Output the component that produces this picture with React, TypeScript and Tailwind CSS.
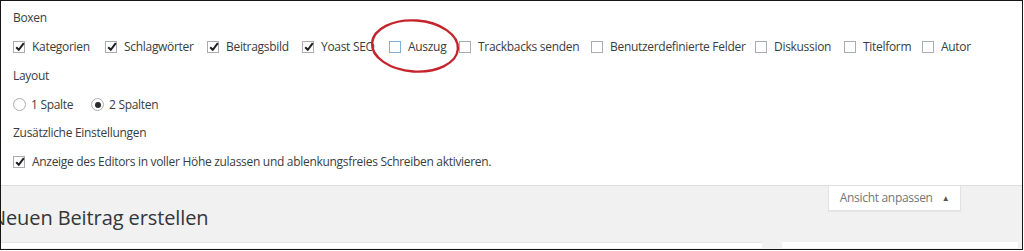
const font = { fontFamily: '"Open Sans", "Noto Sans", sans-serif' };

function Check({ checked = false, focus = false }: { checked?: boolean; focus?: boolean }) {
  return (
    <span
      className={`relative inline-flex h-[12px] w-[12px] shrink-0 items-center justify-center border bg-white ${
        focus ? "border-[#7fb0dc]" : "border-[#a9adb2]"
      }`}
    >
      {checked && (
        <svg viewBox="0 0 12 12" className="absolute left-[0px] top-[-1px] h-[12px] w-[12px]">
          <path d="M2.2 6.2 L4.8 8.8 L9.8 2.2" fill="none" stroke="#1f1f1f" strokeWidth="2" />
        </svg>
      )}
    </span>
  );
}

function Radio({ checked = false }: { checked?: boolean }) {
  return (
    <span className="inline-flex h-[13px] w-[13px] shrink-0 items-center justify-center rounded-full border border-[#a9adb2] bg-white">
      {checked && <span className="h-[6px] w-[6px] rounded-full bg-[#2a2a2a]" />}
    </span>
  );
}

const boxes = [
  { label: "Kategorien", checked: true, w: "w-[92px]" },
  { label: "Schlagwörter", checked: true, w: "w-[102px]" },
  { label: "Beitragsbild", checked: true, w: "w-[95px]" },
  { label: "Yoast SEO", checked: true, w: "w-[87px]" },
  { label: "Auszug", checked: false, focus: true, w: "w-[70px]" },
  { label: "Trackbacks senden", checked: false, w: "w-[132px]" },
  { label: "Benutzerdefinierte Felder", checked: false, w: "w-[164px]" },
  { label: "Diskussion", checked: false, w: "w-[89px]" },
  { label: "Titelform", checked: false, w: "w-[78px]" },
  { label: "Autor", checked: false, w: "w-auto" },
];

export default function App() {
  return (
    <div className="h-[251px] w-[1024px] bg-white" style={font}>
      <div className="relative flex h-[250px] w-[1023px] flex-col overflow-hidden border border-[#161616] text-[12px] tracking-[-0.3px] text-[#3a3d40]">
        <div className="border-b border-[#dedede] bg-white pb-[9px] pl-[12px] pt-[2px]">
          <div className="flex h-[29px] items-center">Boxen</div>
          <div className="flex h-[29px] items-center">
            {boxes.map((b) => (
              <label key={b.label} className={`flex shrink-0 items-center gap-[7px] ${b.w}`}>
                <Check checked={b.checked} focus={b.focus} />
                <span>{b.label}</span>
              </label>
            ))}
          </div>
          <div className="flex h-[29px] items-center">Layout</div>
          <div className="flex h-[29px] items-center">
            <label className="flex w-[78px] items-center gap-[5px]">
              <Radio />
              <span>1 Spalte</span>
            </label>
            <label className="flex items-center gap-[5px]">
              <Radio checked />
              <span>2 Spalten</span>
            </label>
          </div>
          <div className="flex h-[28.5px] items-center">Zusätzliche Einstellungen</div>
          <div className="flex h-[28.5px] items-center">
            <label className="flex items-center gap-[7px]">
              <Check checked />
              <span>Anzeige des Editors in voller Höhe zulassen und ablenkungsfreies Schreiben aktivieren.</span>
            </label>
          </div>
        </div>

        <div className="flex-1 bg-[#f1f1f1]">
          <div className="flex justify-end pr-[61px]">
            <div className="flex h-[25px] w-[133px] items-center justify-center gap-[9px] border-x border-b border-[#e2e2e2] bg-white text-[#72777c] shadow-[0_1px_1px_rgba(0,0,0,0.04)]">
              <span>Ansicht anpassen</span>
              <span className="text-[8px] text-[#555]">▲</span>
            </div>
          </div>
          <h1 className="ml-[-10px] mt-[-5px] h-[24px] text-[20px] font-normal leading-[24px] tracking-[-0.1px] text-[#33363a]">
            Neuen Beitrag erstellen
          </h1>
          <div className="mt-[12px] flex h-[6px]">
            <div className="w-[761px] border-t border-[#e4e4e4] bg-white" />
            <div className="w-[20px]" />
            <div className="w-[236px] bg-white" />
          </div>
        </div>

        <svg className="pointer-events-none absolute left-[368px] top-[17px]" width="92" height="56" viewBox="0 0 92 56">
          <ellipse cx="46" cy="28" rx="43" ry="25.5" fill="none" stroke="#c4242b" strokeWidth="2.4" transform="rotate(4 46 28)" />
        </svg>
      </div>
    </div>
  );
}
